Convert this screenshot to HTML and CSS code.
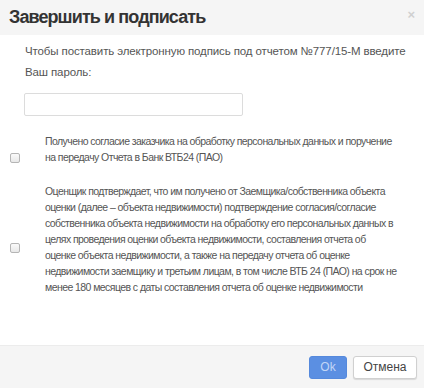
FILE: index.html
```html
<!DOCTYPE html>
<html lang="ru">
<head>
<meta charset="utf-8">
<title>Завершить и подписать</title>
<link rel="stylesheet" href="styles.css">
</head>
<body>
<div class="modal">
  <div class="modal-header">
    <h1 class="modal-title">Завершить и подписать</h1>
    <span class="close">×</span>
  </div>
  <div class="modal-body">
    <p class="intro">Чтобы поставить электронную подпись под отчетом №777/15-М введите<br>Ваш пароль:</p>
    <input class="pass" type="password">
    <label class="row">
      <span class="box"><input type="checkbox" class="check"></span>
      <span class="text">Получено согласие заказчика на обработку персональных данных и поручение на передачу Отчета в Банк ВТБ24 (ПАО)</span>
    </label>
    <label class="row">
      <span class="box"><input type="checkbox" class="check"></span>
      <span class="text">Оценщик подтверждает, что им получено от Заемщика/собственника объекта оценки (далее – объекта недвижимости) подтверждение согласия/согласие собственника объекта недвижимости на обработку его персональных данных в целях проведения оценки объекта недвижимости, составления отчета об оценке объекта недвижимости, а также на передачу отчета об оценке недвижимости заемщику и третьим лицам, в том числе ВТБ 24 (ПАО) на срок не менее 180 месяцев с даты составления отчета об оценке недвижимости</span>
    </label>
  </div>
  <div class="modal-footer">
    <button class="btn btn-ok">Ok</button>
    <button class="btn btn-cancel">Отмена</button>
  </div>
</div>
</body>
</html>
```
FILE: styles.css
```css
* { box-sizing: border-box; }
html, body { margin: 0; padding: 0; background: #fff; }
body { font-family: "Liberation Sans", Arial, sans-serif; color: #555; }

.modal {
  width: 424px;
  height: 388px;
  display: flex;
  flex-direction: column;
  background: #fff;
}

.modal-header {
  height: 35px;
  flex: none;
  background: #f5f5f5;
  display: flex;
  align-items: center;
  justify-content: space-between;
  padding: 0 9px 0 9px;
}
.modal-title {
  margin: 0;
  font-size: 18px;
  font-weight: bold;
  letter-spacing: -0.9px;
  color: #333;
  line-height: 35px;
}
.close {
  font-size: 13px;
  font-weight: bold;
  color: #d0d0d0;
  line-height: 1;
  margin-top: -6px;
}

.modal-body {
  flex: 1;
  padding: 6px 0 0 0;
}
.intro {
  margin: 0 8px 0 25px;
  font-size: 11.5px;
  letter-spacing: -0.12px;
  line-height: 21px;
  color: #555;
}
.pass {
  display: block;
  margin: 10px 0 0 24px;
  width: 219px;
  height: 23px;
  border: 1px solid #dcdcdc;
  border-radius: 2px;
  background: #fff;
  outline: none;
}

.row {
  display: flex;
  align-items: center;
  padding-right: 26.5px;
}
.pass + .row { margin-top: 17px; }
.box {
  width: 45px;
  flex: none;
  display: flex;
  padding-left: 10px;
}
.check {
  appearance: none;
  -webkit-appearance: none;
  margin: 0;
  width: 10px;
  height: 10px;
  border: 1px solid #b5b5b5;
  border-radius: 2px;
  background: linear-gradient(#fafafa, #e8e8e8);
}
.text {
  font-size: 10.5px;
  letter-spacing: -0.57px;
  line-height: 16px;
  color: #555;
  padding-bottom: 18px;
}

.modal-footer {
  height: 43px;
  flex: none;
  background: #f5f5f5;
  border-top: 1px solid #ececec;
  display: flex;
  justify-content: flex-end;
  align-items: center;
  gap: 6px;
  padding: 0 7px 0 0;
}
.btn {
  height: 23px;
  font-family: "Liberation Sans", Arial, sans-serif;
  font-size: 12px;
  border-radius: 3px;
  padding: 0;
}
.btn-ok {
  width: 38px;
  background: #5b8fe2;
  border: 1px solid #5589dc;
  color: #c3d6f6;
}
.btn-cancel {
  width: 64px;
  background: #fff;
  border: 1px solid #d0d0d0;
  color: #444;
  box-shadow: 0 1px 1px rgba(0,0,0,0.12);
}
```
